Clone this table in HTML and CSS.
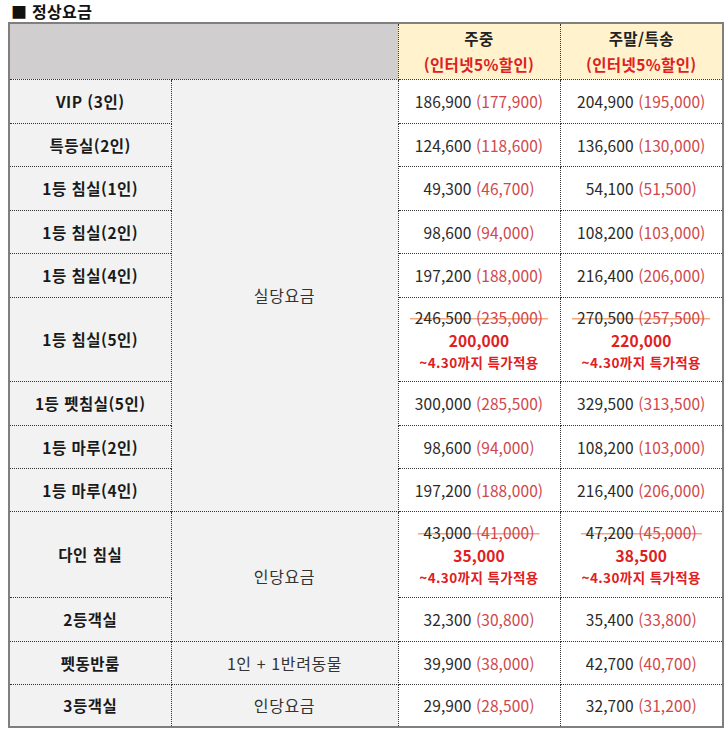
FILE: index.html
```html
<!DOCTYPE html>
<html lang="ko">
<head>
<meta charset="utf-8">
<link rel="stylesheet" href="styles.css">
</head>
<body>
<div class="title">■ 정상요금</div>
<table class="fares">
  <colgroup>
    <col class="c1"><col class="c2"><col class="c3"><col class="c4">
  </colgroup>
  <thead>
    <tr class="h-head">
      <th class="blank" colspan="2"></th>
      <th class="ph">주중<br><span class="disc">(인터넷5%할인)</span></th>
      <th class="ph">주말/특송<br><span class="disc">(인터넷5%할인)</span></th>
    </tr>
  </thead>
  <tbody>
    <tr class="r44"><td class="lbl">VIP (3인)</td><td class="unit" rowspan="9">실당요금</td><td class="pr">186,900 <span class="rp">(177,900)</span></td><td class="pr">204,900 <span class="rp">(195,000)</span></td></tr>
    <tr class="r43"><td class="lbl">특등실(2인)</td><td class="pr">124,600 <span class="rp">(118,600)</span></td><td class="pr">136,600 <span class="rp">(130,000)</span></td></tr>
    <tr class="r44"><td class="lbl">1등 침실(1인)</td><td class="pr">49,300 <span class="rp">(46,700)</span></td><td class="pr">54,100 <span class="rp">(51,500)</span></td></tr>
    <tr class="r43"><td class="lbl">1등 침실(2인)</td><td class="pr">98,600 <span class="rp">(94,000)</span></td><td class="pr">108,200 <span class="rp">(103,000)</span></td></tr>
    <tr class="r44"><td class="lbl">1등 침실(4인)</td><td class="pr">197,200 <span class="rp">(188,000)</span></td><td class="pr">216,400 <span class="rp">(206,000)</span></td></tr>
    <tr class="r84"><td class="lbl">1등 침실(5인)</td>
      <td class="pr"><span class="old">246,500 <span class="rp">(235,000)</span></span><span class="sale">200,000</span><span class="note">~4.30까지 특가적용</span></td>
      <td class="pr"><span class="old">270,500 <span class="rp">(257,500)</span></span><span class="sale">220,000</span><span class="note">~4.30까지 특가적용</span></td></tr>
    <tr class="r44"><td class="lbl">1등 펫침실(5인)</td><td class="pr">300,000 <span class="rp">(285,500)</span></td><td class="pr">329,500 <span class="rp">(313,500)</span></td></tr>
    <tr class="r43"><td class="lbl">1등 마루(2인)</td><td class="pr">98,600 <span class="rp">(94,000)</span></td><td class="pr">108,200 <span class="rp">(103,000)</span></td></tr>
    <tr class="r43"><td class="lbl">1등 마루(4인)</td><td class="pr">197,200 <span class="rp">(188,000)</span></td><td class="pr">216,400 <span class="rp">(206,000)</span></td></tr>
    <tr class="r86"><td class="lbl">다인 침실</td><td class="unit" rowspan="2">인당요금</td>
      <td class="pr"><span class="old">43,000 <span class="rp">(41,000)</span></span><span class="sale">35,000</span><span class="note">~4.30까지 특가적용</span></td>
      <td class="pr"><span class="old">47,200 <span class="rp">(45,000)</span></span><span class="sale">38,500</span><span class="note">~4.30까지 특가적용</span></td></tr>
    <tr class="r44"><td class="lbl">2등객실</td><td class="pr">32,300 <span class="rp">(30,800)</span></td><td class="pr">35,400 <span class="rp">(33,800)</span></td></tr>
    <tr class="r43"><td class="lbl">펫동반룸</td><td class="unit">1인 + 1반려동물</td><td class="pr">39,900 <span class="rp">(38,000)</span></td><td class="pr">42,700 <span class="rp">(40,700)</span></td></tr>
    <tr class="r43"><td class="lbl">3등객실</td><td class="unit">인당요금</td><td class="pr">29,900 <span class="rp">(28,500)</span></td><td class="pr">32,700 <span class="rp">(31,200)</span></td></tr>
  </tbody>
</table>
</body>
</html>
```

FILE: styles.css
```css
html, body {
  margin: 0;
  padding: 0;
  background: #ffffff;
}
body {
  font-family: "Noto Sans CJK KR", "Noto Sans", sans-serif;
  color: #222222;
  font-size: 15.5px;
}
.title {
  font-weight: bold;
  font-size: 16px;
  line-height: 22px;
  height: 22px;
  padding-left: 11px;
  letter-spacing: 0.3px;
  color: #111111;
}
.fares {
  margin-left: 8px;
  width: 714px;
  border-collapse: collapse;
  border: 2px solid #7f7f7f;
  table-layout: fixed;
}
.c1 { width: 162px; }
.c2 { width: 227px; }
.c3 { width: 162px; }
.c4 { width: 163px; }
.fares th, .fares td {
  border: 1px dotted #333333;
  padding: 0;
  text-align: center;
  vertical-align: middle;
}
.h-head { height: 56px; }
.blank { background: #d0cece; }
.ph {
  background: #fff2cc;
  font-weight: bold;
  font-size: 15.5px;
  letter-spacing: 0.4px;
  line-height: 26px;
  color: #222222;
}
.disc { color: #e0201e; }
.lbl {
  background: #f2f2f2;
  font-weight: bold;
  font-size: 15.5px;
  letter-spacing: 0.5px;
  color: #1a1a1a;
}
.unit {
  background: #f2f2f2;
  font-size: 16px;
  letter-spacing: 0.6px;
  color: #333333;
}
.pr {
  background: #ffffff;
  font-size: 15.5px;
  letter-spacing: 0.1px;
  color: #2a2a2a;
}
.rp { color: #d0474b; }
.r43 { height: 43px; }
.r44 { height: 44px; }
.r84 { height: 84px; }
.r86 { height: 86px; }
.old {
  display: inline-block;
  padding: 0 5px;
  line-height: 22px;
  background: linear-gradient(#f4a77e, #f4a77e) no-repeat center 12px / 100% 1.5px;
}
.sale {
  display: block;
  font-weight: bold;
  color: #e0201e;
  font-size: 15.5px;
  line-height: 24px;
}
.note {
  display: block;
  font-weight: bold;
  color: #e0201e;
  font-size: 13.5px;
  letter-spacing: 0.4px;
  line-height: 20px;
}
```
